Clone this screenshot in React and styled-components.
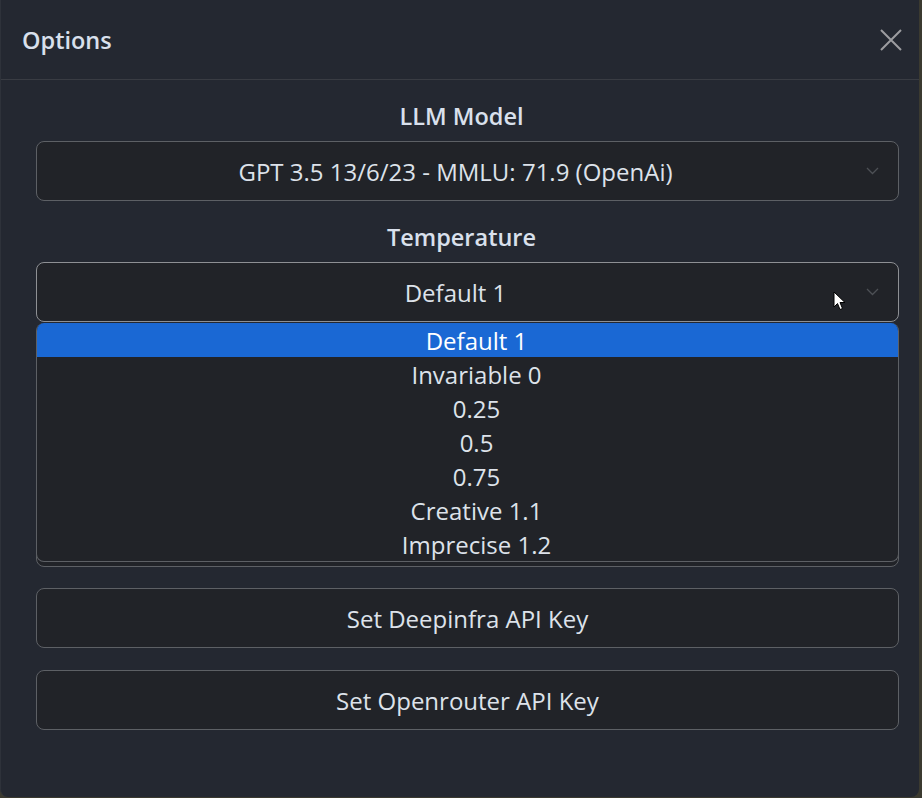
import React from 'react';
import styled, { createGlobalStyle } from 'styled-components';

const GlobalStyle = createGlobalStyle`
    html, body {
        margin: 0;
        padding: 0;
        background: #3b3a30;
    }
    body {
        font-family: "Open Sans", "Noto Sans", sans-serif;
        color: #dde2ea;
    }
`

const Modal = styled.div`
    width: 919px;
    height: 797px;
    background: #242831;
    border-radius: 0 0 8px 8px;
    display: flex;
    flex-direction: column;
    box-sizing: border-box;
    border-left: 1px solid #2e323a;
`

const Header = styled.header`
    height: 80px;
    flex-shrink: 0;
    display: flex;
    align-items: center;
    justify-content: space-between;
    padding: 0 13px 0 21px;
    border-bottom: 1px solid #393c43;
    box-sizing: border-box;
`

const Title = styled.h1`
    margin: 0;
    font-size: 23.5px;
    font-weight: 600;
    color: #d9e0ec;
`

const CloseButton = styled.button`
    width: 30px;
    height: 30px;
    padding: 0;
    border: none;
    background: transparent;
    display: flex;
    align-items: center;
    justify-content: center;
    cursor: pointer;
`

const Body = styled.div`
    padding: 21px 20px 0 35px;
    display: flex;
    flex-direction: column;
`

const Label = styled.div`
    text-align: center;
    font-size: 23.5px;
    font-weight: 600;
    height: 40px;
    line-height: 30px;
    padding-right: 12px;
    color: #d9e0ec;
`

const Field = styled.div`
    position: relative;
    margin-bottom: ${p => p.$gap || 22}px;
`

const SelectBox = styled.div`
    height: 60px;
    box-sizing: border-box;
    border: 1px solid ${p => p.$focused ? '#8e9094' : '#5d6065'};
    border-radius: 8px;
    background: #212328;
    display: flex;
    align-items: center;
    justify-content: center;
    padding: 0 36px 0 12px;
    font-size: 24px;
    color: #dde2ea;
    position: relative;
`

const Chevron = styled.svg`
    position: absolute;
    right: 19px;
    top: 50%;
    margin-top: -4px;
`

const Button = styled.button`
    height: 60px;
    box-sizing: border-box;
    border: 1px solid #5d6065;
    border-radius: 8px;
    background: #212328;
    font-family: inherit;
    font-size: 24px;
    color: #dde2ea;
    margin-bottom: 22px;
`

const OptionList = styled.ul`
    position: absolute;
    top: 61px;
    left: 0;
    right: 0;
    margin: 0;
    padding: 0;
    list-style: none;
    background: #212328;
    border: 1px solid #5d6065;
    border-top: none;
    border-radius: 8px;
    overflow: hidden;
    z-index: 2;
`

const OptionItem = styled.li`
    height: 34px;
    line-height: 36px;
    text-align: center;
    padding-left: 18px;
    font-size: 24px;
    color: ${p => p.$selected ? '#ffffff' : '#dde2ea'};
    background: ${p => p.$selected ? '#1a68d4' : 'transparent'};
`

const Pointer = styled.svg`
    position: absolute;
    left: 797px;
    top: 29px;
    z-index: 3;
`

const HiddenBox = styled.div`
    height: 183px;
    margin-top: 40px;
    margin-bottom: 21px;
    box-sizing: border-box;
    border: 1px solid #5d6065;
    border-radius: 8px;
    background: #212328;
`

const temperatures = ['Default 1', 'Invariable 0', '0.25', '0.5', '0.75', 'Creative 1.1', 'Imprecise 1.2'];

const Arrow = () => (
    <Chevron width="13" height="8" viewBox="0 0 13 8">
        <path d="M1 1 L6.5 6.5 L12 1" fill="none" stroke="#4d5055" strokeWidth="1.3" />
    </Chevron>
);

const App = () => {
    return (
        <>
            <GlobalStyle />
            <Modal>
                <Header>
                    <Title>Options</Title>
                    <CloseButton aria-label="Close">
                        <svg width="22" height="22" viewBox="0 0 22 22">
                            <path d="M1 1 L21 21 M21 1 L1 21" stroke="#9c9da0" strokeWidth="2" />
                        </svg>
                    </CloseButton>
                </Header>
                <Body>
                    <Label>LLM Model</Label>
                    <Field $gap={21}>
                        <SelectBox>
                            GPT 3.5 13/6/23 - MMLU: 71.9 (OpenAi)
                            <Arrow />
                        </SelectBox>
                    </Field>
                    <Label>Temperature</Label>
                    <Field $gap={0}>
                        <SelectBox $focused>
                            Default 1
                            <Arrow />
                        </SelectBox>
                        <Pointer width="14" height="20" viewBox="0 0 14 20">
                            <path d="M1 1 L1 16 L4.5 12.5 L7 18.5 L9.5 17.5 L7 11.5 L12 11.5 Z" fill="#ffffff" stroke="#000000" strokeWidth="1" />
                        </Pointer>
                        <OptionList>
                            {temperatures.map((t, i) => (
                                <OptionItem key={t} $selected={i === 0}>{t}</OptionItem>
                            ))}
                        </OptionList>
                    </Field>
                    <HiddenBox />
                    <Button>Set Deepinfra API Key</Button>
                    <Button>Set Openrouter API Key</Button>
                </Body>
            </Modal>
        </>
    )
}

export default App;
